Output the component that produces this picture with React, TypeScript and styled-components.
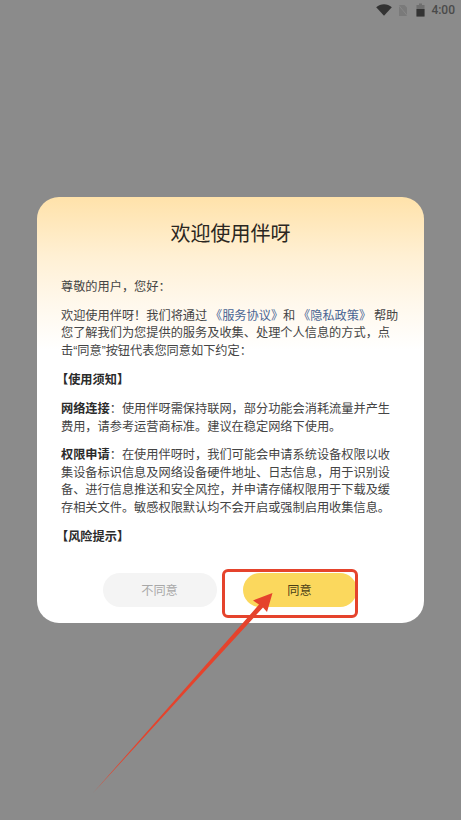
import React from "react";
import styled, { createGlobalStyle } from "styled-components";

const Global = createGlobalStyle`
  html, body { margin: 0; padding: 0; background: #8b8b8b; }
  body { font-family: "Noto Sans CJK SC", "Noto Sans", sans-serif; }
  * { box-sizing: border-box; }
`;
const Screen = styled.div`
  position: relative;
  width: 461px;
  height: 820px;
  overflow: hidden;
  background: #8b8b8b;
`;
const StatusBar = styled.div`
  display: flex;
  align-items: center;
  justify-content: flex-end;
  gap: 6px;
  height: 20px;
  padding-right: 6px;
`;
const Clock = styled.span`
  font-family: Roboto, "Liberation Sans", sans-serif;
  font-size: 12px;
  font-weight: 500;
  color: #4a4a4a;
`;
const BatteryIcon = styled.svg`
  margin-left: 2px;
`;
const Modal = styled.section`
  width: 387px;
  height: 426px;
  margin: 177px 0 0 37px;
  border-radius: 22px;
  background: linear-gradient(180deg, #ffe2aa 0%, #fff0d4 14%, #fff8ec 25%, #ffffff 36%);
  padding: 0 24px;
  display: flex;
  flex-direction: column;
`;
const Title = styled.h1`
  margin: 22px 0 0;
  height: 28px;
  line-height: 28px;
  font-size: 20px;
  font-weight: 400;
  text-align: center;
  color: #2a2621;
`;
const Body = styled.div`
  flex: 1;
  margin-top: 31px;
  color: #444;
  font-size: 12.2px;
  line-height: 17.6px;
`;
const Para = styled.p`
  margin: 0 0 11px;
  white-space: nowrap;
`;
const Strong = styled.b`
  font-weight: 700;
  color: #2b2b2b;
`;
const Heading = styled(Strong)`
  display: block;
  margin-left: -5px;
`;
const Quote = styled.span`
  font-family: "Liberation Sans", sans-serif;
`;
const Link = styled.span`
  color: #4a6593;
`;
const Actions = styled.div`
  display: flex;
  justify-content: center;
  gap: 26px;
  margin: 0 0 16px -2px;
`;
const Button = styled.button<{ $primary?: boolean }>`
  width: 114px;
  height: 34px;
  border: 0;
  padding: 0;
  border-radius: 17px;
  font: inherit;
  font-size: 12.2px;
  background: ${(p) => (p.$primary ? "#fbd85d" : "#f4f4f4")};
  color: ${(p) => (p.$primary ? "#4a3f17" : "#a8a8a8")};
`;
const Highlight = styled.div`
  position: absolute;
  left: 222px;
  top: 569px;
  width: 136px;
  height: 49px;
  border: 3px solid #e5432c;
  border-radius: 6px;
`;
const ArrowSvg = styled.svg`
  position: absolute;
  left: 0;
  top: 0;
  pointer-events: none;
`;

export default function App() {
  return (
    <Screen>
      <Global />
      <StatusBar>
        <svg width="16" height="12" viewBox="0 0 16 12">
          <path d="M0.2 3.2C4.5 -0.8 11.5 -0.8 15.8 3.2L8 11.8Z" fill="#333" />
        </svg>
        <svg width="10" height="13" viewBox="0 0 10 13">
          <path d="M1 1H6.5L9 3.5V12H1Z" fill="#7a7a7a" />
          <path d="M0.5 1L9.5 12" stroke="#8b8b8b" strokeWidth="0.8" />
        </svg>
        <BatteryIcon width="9" height="14" viewBox="0 0 9 14">
          <path d="M3 0.5H6V2H8.5V13.5H0.5V2H3Z" fill="#6f6f6f" />
          <path d="M0.5 6H8.5V13.5H0.5Z" fill="#333" />
        </BatteryIcon>
        <Clock>4:00</Clock>
      </StatusBar>
      <Modal>
        <Title>欢迎使用伴呀</Title>
        <Body>
          <Para>尊敬的用户，您好：</Para>
          <Para>
            欢迎使用伴呀！我们将通过 <Link>《服务协议》</Link>和 <Link>《隐私政策》</Link> 帮助
            <br />
            您了解我们为您提供的服务及收集、处理个人信息的方式，点
            <br />
            击<Quote>“</Quote>同意<Quote>”</Quote>按钮代表您同意如下约定：
          </Para>
          <Para>
            <Heading>【使用须知】</Heading>
          </Para>
          <Para>
            <Strong>网络连接</Strong>：使用伴呀需保持联网，部分功能会消耗流量并产生
            <br />
            费用，请参考运营商标准。建议在稳定网络下使用。
          </Para>
          <Para>
            <Strong>权限申请</Strong>：在使用伴呀时，我们可能会申请系统设备权限以收
            <br />
            集设备标识信息及网络设备硬件地址、日志信息，用于识别设
            <br />
            备、进行信息推送和安全风控，并申请存储权限用于下载及缓
            <br />
            存相关文件。敏感权限默认均不会开启或强制启用收集信息。
          </Para>
          <Para>
            <Heading>【风险提示】</Heading>
          </Para>
        </Body>
        <Actions>
          <Button>不同意</Button>
          <Button $primary>同意</Button>
        </Actions>
      </Modal>
      <Highlight />
      <ArrowSvg width="461" height="820" viewBox="0 0 461 820">
        <path
          d="M272.5 593L253 600.5L259 604.5L93 793L263 607.5L267 612Z"
          fill="#e5432c"
        />
      </ArrowSvg>
    </Screen>
  );
}
